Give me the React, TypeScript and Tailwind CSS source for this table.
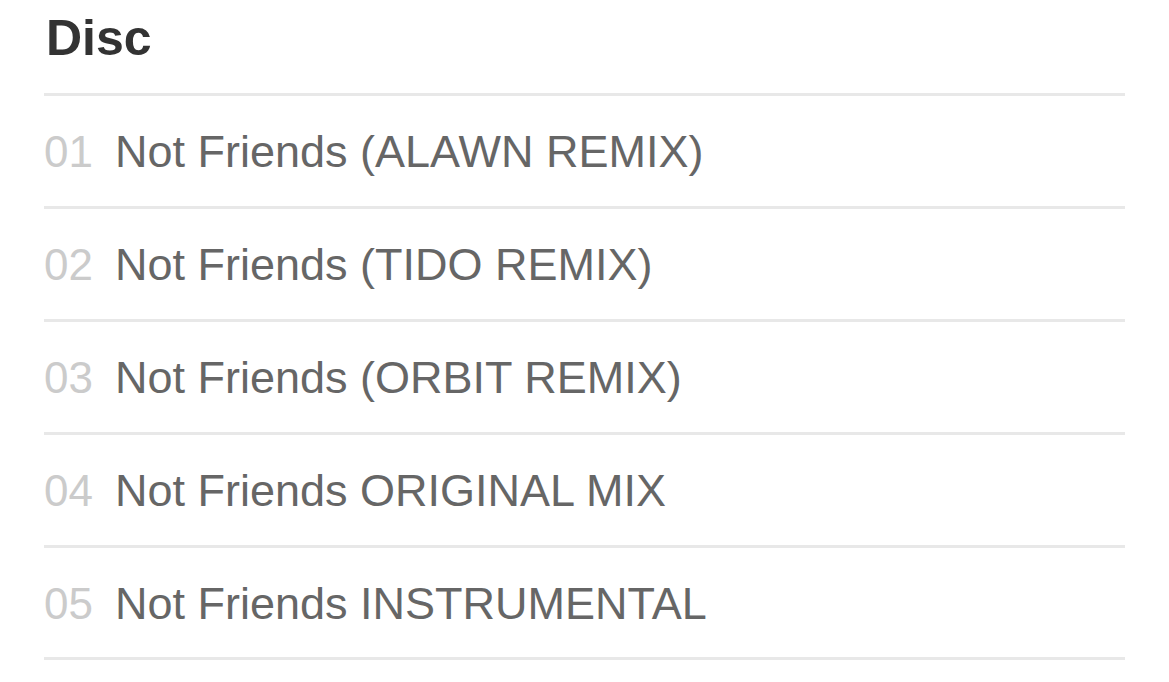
const tracks = [
  { no: "01", title: "Not Friends (ALAWN REMIX)" },
  { no: "02", title: "Not Friends (TIDO REMIX)" },
  { no: "03", title: "Not Friends (ORBIT REMIX)" },
  { no: "04", title: "Not Friends ORIGINAL MIX" },
  { no: "05", title: "Not Friends INSTRUMENTAL" },
];

export default function App() {
  return (
    <main
      className="w-[1169px] h-[682px] bg-white pl-[44px] pr-[44px] overflow-hidden"
      style={{ fontFamily: '"Liberation Sans", Arial, sans-serif' }}
    >
      <h2 className="mt-[13px] mb-[30px] ml-[2px] text-[50px] leading-none font-bold text-[#333333]">
        Disc
      </h2>
      <ol className="border-t-[3px] border-[#e8e8e8]">
        {tracks.map((track) => (
          <li
            key={track.no}
            className="flex flex-row items-center h-[112.9px] pt-[2px] border-b-[3px] border-[#e8e8e8] leading-none"
          >
            <span className="w-[71px] shrink-0 text-[44px] text-[#cbcbcb]">{track.no}</span>
            <span className="text-[45px] text-[#666666]">{track.title}</span>
          </li>
        ))}
      </ol>
    </main>
  );
}
